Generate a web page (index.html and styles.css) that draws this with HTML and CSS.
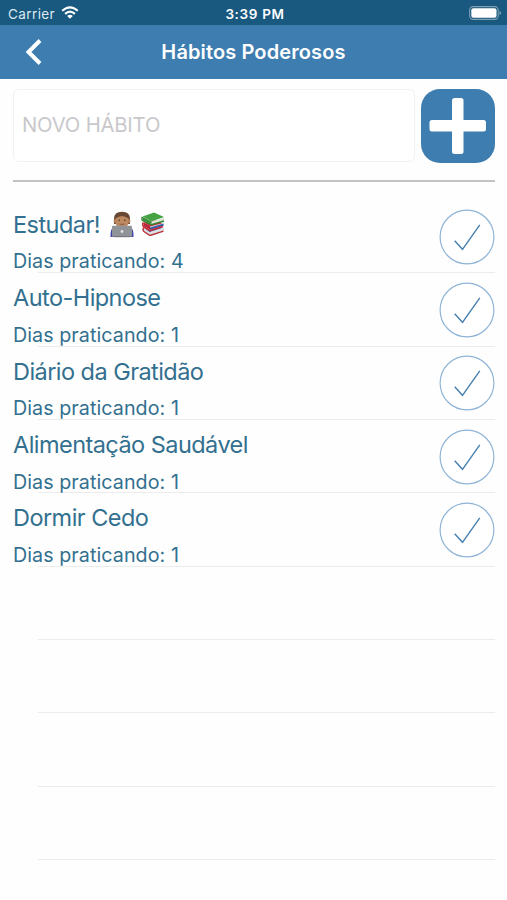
FILE: index.html
```html
<!DOCTYPE html>
<html lang="pt-BR">
<head>
<meta charset="utf-8">
<title>Hábitos Poderosos</title>
<link rel="stylesheet" href="styles.css">
</head>
<body>
<svg class="defs" aria-hidden="true">
  <symbol id="check" viewBox="0 0 56 56">
    <circle cx="28" cy="28" r="26.9" fill="#fff" stroke="#8fb4d6" stroke-width="1.2"/>
    <path d="M15.7 31.8L23.5 40.3L40.8 15.9" fill="none" stroke="#4780b0" stroke-width="1.4"/>
  </symbol>
</svg>
<div class="status">
  <div class="carrier"><span>Carrier</span>
    <svg class="wifi" viewBox="0 0 18 13"><g fill="none" stroke="#fff" stroke-width="2.1"><path d="M1.2 4.8Q9 -2.2 16.8 4.8"/><path d="M4.1 7.9Q9 3.5 13.9 7.9"/></g><path d="M6.2 9.9Q9 7.7 11.8 9.9L9 12.7Z" fill="#fff"/></svg>
  </div>
  <div class="time">3:39 PM</div>
  <svg class="battery" viewBox="0 0 33 14"><rect x=".6" y=".6" width="28.6" height="12.8" rx="3.6" fill="none" stroke="#7f9fb3" stroke-width="1.1"/><rect x="2.3" y="2.3" width="25.2" height="9.4" rx="2" fill="#fff"/><path d="M30.5 5q1.7 .6 1.7 2t-1.7 2z" fill="#7f9fb3"/></svg>
</div>
<header class="nav">
  <svg class="back" viewBox="0 0 18 28"><path d="M15 2.5L3.5 14L15 25.5" fill="none" stroke="#fff" stroke-width="4"/></svg>
  <h1>Hábitos Poderosos</h1>
</header>
<section class="entry">
  <input class="field" type="text" placeholder="NOVO HÁBITO" aria-label="Novo hábito">
  <button class="add" aria-label="Adicionar"><svg viewBox="0 0 74 74"><rect x="31" y="9" width="11.5" height="56" rx="2.5" fill="#fff"/><rect x="8.5" y="31" width="56.5" height="11.5" rx="2.5" fill="#fff"/></svg></button>
</section>
<ul class="list">
  <li><div class="text"><h2><span>Estudar!</span>
    <svg class="person" viewBox="0 0 24 27" role="img" aria-label="Programador">
      <path d="M0.5 26Q0 17 5 15h14q5 2 4.5 11z" fill="#4147a8"/>
      <path d="M4 8Q4 .8 12 .8T20 8v5H4z" fill="#694735"/>
      <path d="M5.5 7.5Q9 5 12 5t6.5 2.5V12q-1 5-6.5 5T5.5 12z" fill="#bd8960"/>
      <ellipse cx="5" cy="10" rx="1.4" ry="2" fill="#b57f57"/><ellipse cx="19" cy="10" rx="1.4" ry="2" fill="#b57f57"/>
      <circle cx="9.2" cy="9.2" r=".8" fill="#49352c"/><circle cx="14.8" cy="9.2" r=".8" fill="#49352c"/><path d="M9.5 13q2.5 1 5 0" fill="none" stroke="#805039" stroke-width=".8"/>
      <rect x="2" y="14.8" width="20" height="11" rx="1" fill="#909398"/><rect x="4" y="25" width="16" height="1.2" fill="#74777d"/><circle cx="12" cy="20.5" r="1.4" fill="#e1e3e6"/>
    </svg>
    <svg class="books" viewBox="0 0 24 24" role="img" aria-label="Livros">
      <path d="M3 15.5L17 13L23 17.5L9 22.5z" fill="#315da0"/><path d="M3 15.5L8.5 20L22.5 15.5V18.5L9 23.5L3 18.5z" fill="#dce0e4"/><path d="M3 15.5q-2 2 0 4l6 4 13.5-4.4" fill="none" stroke="#b8343d" stroke-width="1.5"/>
      <path d="M2.5 9.5L17 8L22.5 13L9 17.5z" fill="#c82c3b"/><path d="M2.5 10L9 14.5L22.5 11V14L9 18.5L2.5 14z" fill="#e4ded9"/><path d="M9 15.5L22.5 11.5V14L9 18z" fill="#3a5fae"/><path d="M2.5 10.5q-1.5 2 0 4L9 18.5L22 14.5" fill="none" stroke="#c62b38" stroke-width="1.7"/><path d="M3 10.5L9 14.3V17.5L3 13.8z" fill="#b92438"/>
      <path d="M1.5 4.5L13 .5L23 5L10.5 9.5z" fill="#46a344"/><path d="M1.5 5L10.5 9.5L23 5.5V8.5L10.5 12.5L1.5 8z" fill="#dee5d8"/><path d="M1.5 5q-1.2 1.8 0 3.5l9 4.2L23 9" fill="none" stroke="#338532" stroke-width="1.4"/><path d="M1.8 5L10.5 9.4V12L1.8 8z" fill="#38923a"/>
    </svg></h2><p>Dias praticando: 4</p></div><svg class="check"><use href="#check"/></svg></li>
  <li><div class="text"><h2>Auto-Hipnose</h2><p>Dias praticando: 1</p></div><svg class="check"><use href="#check"/></svg></li>
  <li><div class="text"><h2>Diário da Gratidão</h2><p>Dias praticando: 1</p></div><svg class="check"><use href="#check"/></svg></li>
  <li><div class="text"><h2>Alimentação Saudável</h2><p>Dias praticando: 1</p></div><svg class="check"><use href="#check"/></svg></li>
  <li><div class="text"><h2>Dormir Cedo</h2><p>Dias praticando: 1</p></div><svg class="check"><use href="#check"/></svg></li>
  <li></li><li></li><li></li><li></li>
</ul>
</body>
</html>
```
FILE: styles.css
```css
* { box-sizing: border-box; }
body { margin: 0; height: 900px; overflow: hidden; background: #fefefe; font-family: Inter, "Liberation Sans", sans-serif; }
h1, h2, p, ul { margin: 0; padding: 0; font-weight: 400; }
svg { display: block; flex: none; }
.defs { display: none; }
.status { display: grid; grid-template-columns: 1fr auto 1fr; align-items: center; height: 25px; padding: 2px 5px 0 8px; background: #19587f; color: #fff; font-size: 13.5px; }
.carrier { display: flex; align-items: center; gap: 6px; color: #dce9f0; letter-spacing: .4px; }
.wifi { width: 18px; height: 13px; margin-top: -2px; }
.time { font-weight: 600; letter-spacing: .65px; }
.battery { width: 33px; height: 14px; justify-self: end; margin-top: -2px; }
.nav { display: grid; grid-template-columns: 60px 1fr 60px; align-items: center; height: 54px; background: #3e7db0; color: #fff; }
.back { width: 18px; height: 28px; margin-left: 24.5px; }
.nav h1 { font-size: 20px; line-height: 26px; font-weight: 600; letter-spacing: .12px; text-align: center; white-space: nowrap; }
.entry { display: flex; gap: 6px; height: 103px; margin: 0 12px 0 13px; padding-top: 10px; border-bottom: 2px solid #c3c3c5; }
.field { width: 402px; height: 73px; padding: 0 8px 2px; border: 1.5px solid #f1f1f2; border-radius: 6px; background: #fff; font: 20.3px Inter, "Liberation Sans", sans-serif; letter-spacing: -.2px; outline: 0; }
.field::placeholder { color: #c8c8cb; opacity: 1; }
.add { width: 74px; height: 74px; margin-top: -.5px; padding: 0; border: 0; border-radius: 19px; background: #3e7db0; }
.list { list-style: none; padding-top: 18.3px; }
.list li { display: flex; justify-content: space-between; height: 73.35px; padding: 0 12px 0 13px; background: linear-gradient(#ececed, #ececed) 38px 100% / calc(100% - 50px) 1.3px no-repeat; }
.text { padding-top: 8.6px; color: #33708f; white-space: nowrap; }
.text h2 { display: flex; align-items: center; height: 32px; font-size: 23.5px; line-height: 32px; letter-spacing: -.55px; }
.text p { height: 26px; margin-top: 7.6px; font-size: 19.7px; line-height: 26px; letter-spacing: .06px; }
.person { width: 24px; height: 27px; margin-left: 10px; }
.books { width: 24px; height: 24px; margin-left: 7px; margin-top: -2px; }
.check { width: 56px; height: 56px; margin-top: 8.5px; }
```
